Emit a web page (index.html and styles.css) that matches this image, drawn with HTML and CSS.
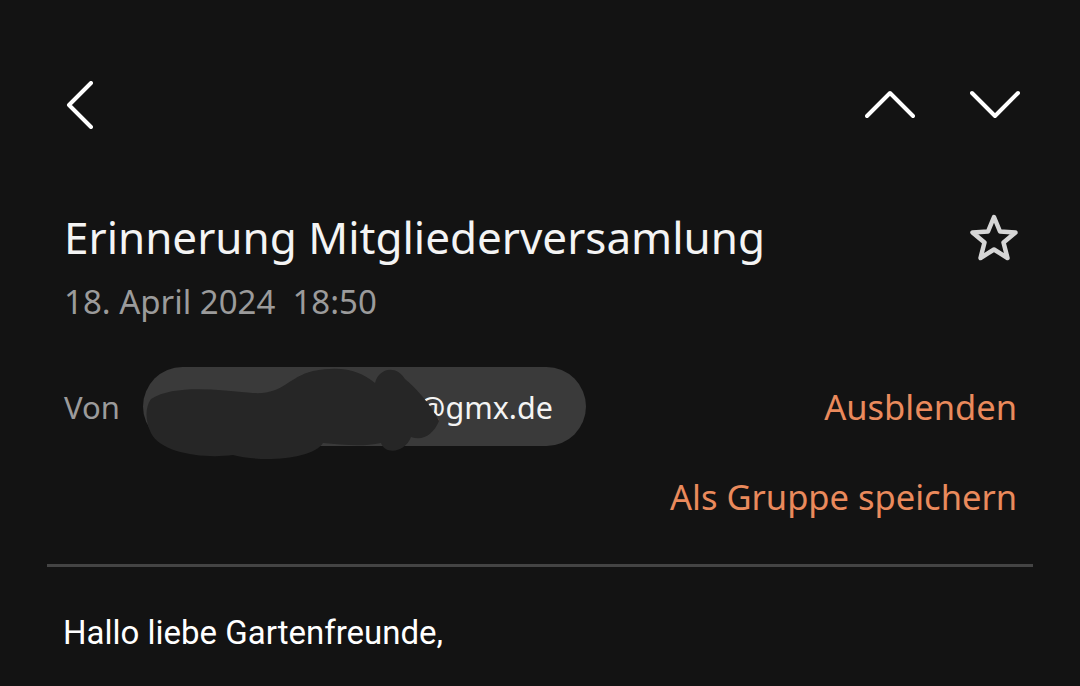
FILE: index.html
```html
<!DOCTYPE html>
<html lang="de">
<head>
    <meta charset="UTF-8">
    <meta name="viewport" content="width=device-width, initial-scale=1.0">
    <title>Erinnerung Mitgliederversamlung</title>
    <link rel="stylesheet" href="styles.css">
</head>
<body>

    <div class="screen">
        <!-- Top bar -->
        <header class="toolbar">
            <button class="icon-btn back" aria-label="Zurück">
                <svg width="30" height="48" viewBox="0 0 30 48"><path d="M25 2 L3 24 L25 46" /></svg>
            </button>
            <div class="nav-arrows">
                <button class="icon-btn" aria-label="Vorherige">
                    <svg width="50" height="30" viewBox="0 0 50 30"><path d="M2 26 L25 3 L48 26" /></svg>
                </button>
                <button class="icon-btn" aria-label="Nächste">
                    <svg width="50" height="30" viewBox="0 0 50 30"><path d="M2 3 L25 26 L48 3" /></svg>
                </button>
            </div>
        </header>

        <!-- Subject -->
        <section class="subject">
            <div class="subject-text">
                <h1>Erinnerung Mitgliederversamlung</h1>
                <p class="date">18. April 2024&nbsp; 18:50</p>
            </div>
            <button class="icon-btn star" aria-label="Markieren">
                <svg width="54" height="54" viewBox="0 0 54 54">
                    <path d="M27 5 L33 19.5 L48.5 20.5 L36.5 30.5 L40.5 46 L27 37.5 L13.5 46 L17.5 30.5 L5.5 20.5 L21 19.5 Z" />
                </svg>
            </button>
        </section>

        <!-- Sender -->
        <section class="sender">
            <div class="sender-row">
                <span class="label">Von</span>
                <span class="address">
                    <span class="redacted"></span>@gmx.de
                    <svg class="scribble" width="300" height="100" viewBox="0 0 300 100">
                        <path d="M8 36 C30 22 70 26 110 30 C140 32 145 14 170 8 C200 2 218 8 232 20 C236 4 254 2 262 16 C274 26 288 42 296 58 C290 72 280 78 268 74 C262 90 242 92 238 80 C220 84 200 82 180 80 C170 96 120 100 90 92 C60 96 18 90 8 70 C2 58 2 44 8 36 Z" />
                    </svg>
                </span>
                <a class="action" href="#">Ausblenden</a>
            </div>
            <div class="group-row">
                <a class="action" href="#">Als Gruppe speichern</a>
            </div>
        </section>

        <hr class="divider">

        <!-- Body -->
        <section class="mail-body">
            <p>Hallo liebe Gartenfreunde,</p>
        </section>
    </div>

</body>
</html>
```

FILE: styles.css
```css
/* Reset */
* {
    box-sizing: border-box;
    margin: 0;
    padding: 0;
}

body {
    background-color: #131313;
    color: #f2f2f2;
    font-family: "Noto Sans", Roboto, sans-serif;
    width: 1080px;
    height: 686px;
    overflow: hidden;
}

.screen {
    padding: 0 47px;
}

/* Icon buttons */
.icon-btn {
    background: none;
    border: none;
    display: flex;
    align-items: center;
    justify-content: center;
    cursor: pointer;
}

.icon-btn svg path {
    fill: none;
    stroke: #ffffff;
    stroke-width: 4;
    stroke-linecap: round;
    stroke-linejoin: round;
}

/* Toolbar */
.toolbar {
    display: flex;
    justify-content: space-between;
    align-items: center;
    height: 100px;
    margin-top: 55px;
}

.toolbar .back {
    margin-left: 19px;
    margin-top: -1px;
}

.nav-arrows {
    display: flex;
    gap: 55px;
    margin-right: 13px;
    margin-top: -1px;
}

/* Subject */
.subject {
    display: flex;
    justify-content: space-between;
    align-items: flex-start;
    margin-top: 52px;
    padding-left: 17px;
}

.subject h1 {
    font-size: 44px;
    font-weight: 400;
    line-height: 60px;
    color: #f4f4f4;
}

.date {
    font-size: 33px;
    line-height: 44px;
    color: #9b9b9b;
    margin-top: 13px;
}

.star {
    margin-right: 12px;
    margin-top: 5px;
}

.star svg path {
    stroke: #d6d6d6;
    stroke-width: 4.5;
}

/* Sender */
.sender {
    margin-top: 43px;
    padding-left: 17px;
}

.sender-row {
    display: flex;
    align-items: center;
}

.label {
    font-size: 31px;
    color: #9b9b9b;
    width: 79px;
}

.address {
    position: relative;
    display: inline-flex;
    align-items: center;
    height: 79px;
    padding: 0 33px 0 24px;
    background-color: #3a3a3a;
    border-radius: 40px;
    font-size: 30.5px;
    color: #f4f4f4;
}

.redacted {
    display: inline-block;
    width: 251px;
}

.scribble {
    position: absolute;
    left: 0;
    top: -4px;
}

.scribble path {
    fill: #262626;
}

.action {
    margin-left: auto;
    font-size: 34.5px;
    color: #ea8a5c;
    text-decoration: none;
    margin-right: 16px;
}

.group-row {
    display: flex;
    justify-content: flex-end;
    margin-top: 27px;
}

/* Divider */
.divider {
    border: none;
    border-top: 3px solid #444444;
    margin-top: 44px;
}

/* Mail body */
.mail-body p {
    font-family: Roboto, sans-serif;
    font-size: 33px;
    color: #ffffff;
    margin-top: 46px;
    padding-left: 16px;
}
```
